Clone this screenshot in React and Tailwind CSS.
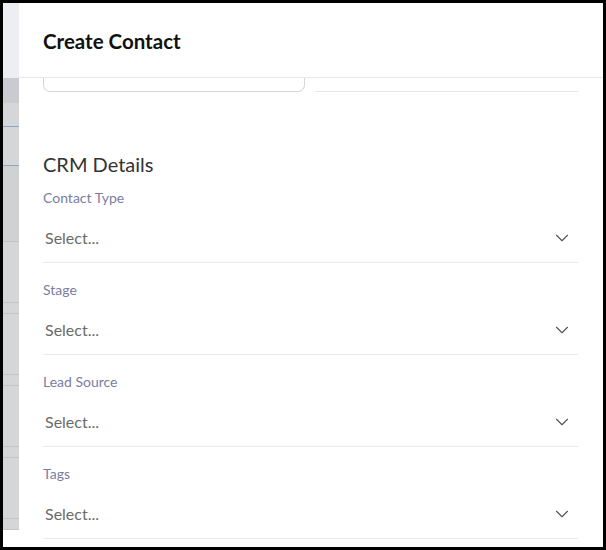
import React from 'react';
import { ChevronDown } from 'lucide-react';

const fields = ['Contact Type', 'Stage', 'Lead Source', 'Tags'];

// rows of the page that sits behind the drawer
const backdropRows = [
    { h: 'h-[75px]', cls: 'bg-[#eceef2]' },
    { h: 'h-[25px]', cls: 'bg-[#c9cbd0]' },
    { h: 'h-[24px]', cls: 'bg-[#d4d6d8] border-b border-[#8fa6c0]' },
    { h: 'h-[39px]', cls: 'bg-[#d4d6d8] border-b border-[#8fa6c0]' },
    { h: 'h-[76px]', cls: 'bg-[#cfd1d3] border-b border-[#c2c4c8]' },
    { h: 'h-[61px]', cls: 'bg-[#d4d6d8] border-b border-[#c2c4c8]' },
    { h: 'h-[11px]', cls: 'bg-[#d4d6d8] border-b border-[#c2c4c8]' },
    { h: 'h-[61px]', cls: 'bg-[#d4d6d8] border-b border-[#c2c4c8]' },
    { h: 'h-[11px]', cls: 'bg-[#d4d6d8] border-b border-[#c2c4c8]' },
    { h: 'h-[61px]', cls: 'bg-[#d4d6d8] border-b border-[#c2c4c8]' },
    { h: 'h-[11px]', cls: 'bg-[#d4d6d8] border-b border-[#c2c4c8]' },
    { h: 'h-[61px]', cls: 'bg-[#d4d6d8] border-b border-[#c2c4c8]' },
    { h: 'h-[11px]', cls: 'bg-[#d4d6d8] border-b border-[#c2c4c8]' },
];

const SelectField = ({ label }) => (
    <div className="flex flex-col">
        <div className="h-[20px] text-[14px] leading-[20px] text-[#7b7ca2]">{label}</div>
        <div className="h-[55px] pt-[5px] flex items-center justify-between border-b border-[#ebebeb]">
            <span className="pl-[2px] text-[16px] text-[#6b6b6b]">Select...</span>
            <ChevronDown size={22} strokeWidth={1.2} className="text-[#555] mr-[5px]" />
        </div>
    </div>
);

export default function App() {
    return (
        <div
            className="w-[606px] h-[550px] bg-black p-[3px] overflow-hidden"
            style={{ fontFamily: 'Lato, "Open Sans", sans-serif' }}
        >
            <div className="flex h-full bg-white overflow-hidden">
                <div className="w-[16px] shrink-0 flex flex-col">
                    {backdropRows.map((r, i) => (
                        <div key={i} className={`${r.h} ${r.cls} shrink-0`} />
                    ))}
                </div>

                <div className="flex-1 flex flex-col">
                    <div className="h-[75px] shrink-0 flex items-center pt-[3px] px-6 border-b border-[#e6e7ee]">
                        <h1 className="text-[20.5px] font-bold text-[#111]">Create Contact</h1>
                    </div>

                    <div className="pl-6 pr-[25px]">
                        <div className="grid grid-cols-2 gap-[11px]">
                            <div className="h-[14px] border-x border-b border-[#d5d8e2] rounded-b-[7px]" />
                            <div className="h-[14px] border-b border-[#e6e6ec]" />
                        </div>

                        <h2 className="mt-[60px] text-[20px] leading-[24px] text-[#333]">CRM Details</h2>

                        <div className="mt-[12px] flex flex-col gap-[17px]">
                            {fields.map((f) => (
                                <SelectField key={f} label={f} />
                            ))}
                        </div>
                    </div>
                </div>
            </div>
        </div>
    );
}
